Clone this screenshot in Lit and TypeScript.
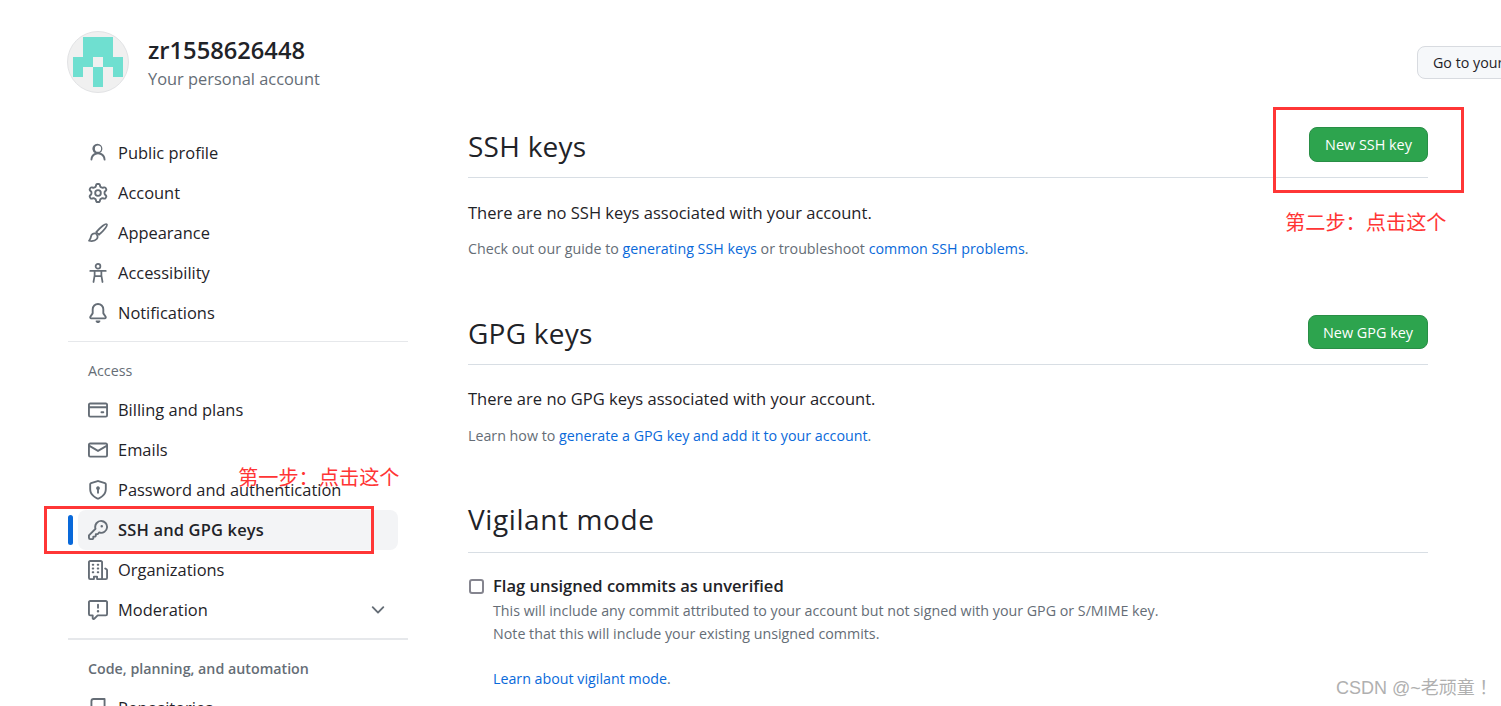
import { LitElement, html, css, svg } from "lit";
import { customElement } from "lit/decorators.js";

const f = (d: string) => svg`<path class="f" fill-rule="evenodd" d=${d}/>`;

const icons: Record<string, unknown> = {
  person: f("M10.561 8.073a6.005 6.005 0 0 1 3.432 5.142.75.75 0 1 1-1.498.07 4.5 4.5 0 0 0-8.99 0 .75.75 0 0 1-1.498-.07 6.004 6.004 0 0 1 3.431-5.142 3.999 3.999 0 1 1 4.123 0ZM10.5 4.5a2.5 2.5 0 1 0-5 0 2.5 2.5 0 0 0 5 0Z"),
  gear: f("M8 0a8.2 8.2 0 0 1 .701.031C9.444.095 9.99.645 10.16 1.29l.288 1.107c.018.066.079.158.212.224.231.114.454.243.668.386.123.082.233.09.299.071l1.103-.303c.644-.176 1.392.021 1.82.63.27.385.506.792.704 1.218.315.675.111 1.422-.364 1.891l-.814.806c-.049.048-.098.147-.088.294.016.257.016.515 0 .772-.01.147.038.246.088.294l.814.806c.475.469.679 1.216.364 1.891a7.977 7.977 0 0 1-.704 1.217c-.428.61-1.176.807-1.82.63l-1.102-.302c-.067-.019-.177-.011-.3.071a5.909 5.909 0 0 1-.668.386c-.133.066-.194.158-.211.224l-.29 1.106c-.168.646-.715 1.196-1.458 1.26a8.006 8.006 0 0 1-1.402 0c-.743-.064-1.289-.614-1.458-1.26l-.289-1.106c-.018-.066-.079-.158-.212-.224a5.738 5.738 0 0 1-.668-.386c-.123-.082-.233-.09-.299-.071l-1.103.303c-.644.176-1.392-.021-1.82-.63a8.12 8.12 0 0 1-.704-1.218c-.315-.675-.111-1.422.363-1.891l.815-.806c.05-.048.098-.147.088-.294a6.214 6.214 0 0 1 0-.772c.01-.147-.038-.246-.088-.294l-.815-.806C.635 6.045.431 5.298.746 4.623a7.92 7.92 0 0 1 .704-1.217c.428-.61 1.176-.807 1.82-.63l1.102.302c.067.019.177.011.3-.071.214-.143.437-.272.668-.386.133-.066.194-.158.211-.224l.29-1.106C6.009.645 6.556.095 7.299.03 7.53.01 7.764 0 8 0Zm-.571 1.525c-.036.003-.108.036-.137.146l-.289 1.105c-.147.561-.549.967-.998 1.189-.173.086-.34.183-.5.29-.417.278-.97.423-1.529.27l-1.103-.303c-.109-.03-.175.016-.195.045-.22.312-.412.644-.573.99-.014.031-.021.11.059.19l.815.806c.411.406.562.957.53 1.456a4.709 4.709 0 0 0 0 .582c.032.499-.119 1.05-.53 1.456l-.815.806c-.081.08-.073.159-.059.19.162.346.353.677.573.989.02.03.085.076.195.046l1.102-.303c.56-.153 1.113-.008 1.53.27.161.107.328.204.501.29.447.222.85.629.997 1.189l.289 1.105c.029.109.101.143.137.146a6.6 6.6 0 0 0 1.142 0c.036-.003.108-.036.137-.146l.289-1.105c.147-.561.549-.967.998-1.189.173-.086.34-.183.5-.29.417-.278.97-.423 1.529-.27l1.103.303c.109.029.175-.016.195-.045.22-.313.411-.644.573-.99.014-.031.021-.11-.059-.19l-.815-.806c-.411-.406-.562-.957-.53-1.456a4.709 4.709 0 0 0 0-.582c-.032-.499.119-1.05.53-1.456l.815-.806c.081-.08.073-.159.059-.19a6.464 6.464 0 0 0-.573-.989c-.02-.03-.085-.076-.195-.046l-1.102.303c-.56.153-1.113.008-1.53-.27a4.44 4.44 0 0 0-.501-.29c-.447-.222-.85-.629-.997-1.189l-.289-1.105c-.029-.11-.101-.143-.137-.146a6.6 6.6 0 0 0-1.142 0ZM11 8a3 3 0 1 1-6 0 3 3 0 0 1 6 0ZM9.5 8a1.5 1.5 0 1 0-3.001.001A1.5 1.5 0 0 0 9.5 8Z"),
  brush: svg`<path d="M15 1c-.9-.9-4.7 1.9-8.4 6.3l2.1 2.1C13.1 5.7 15.9 1.9 15 1Z"/><path d="M6.3 8.4c-2.2-.5-3.6.7-3.9 2.4-.2 1.3-.7 2.5-1.6 3.4 2.4.5 4.9.1 6.2-1.4 1-1.2.7-3-.7-4.4Z"/>`,
  access: svg`<circle cx="8" cy="2.6" r="1.9"/><path d="M1.8 6.3h12.4M5.3 6.3v3.6l-.9 5.3M10.7 6.3v3.6l.9 5.3M5.3 10.4h5.4"/>`,
  bell: f("M8 16c.9 0 1.7-.6 1.9-1.5.1-.3-.1-.5-.4-.5h-3c-.3 0-.5.2-.4.5.2.9 1 1.5 1.9 1.5ZM3 5a5 5 0 0 1 10 0v2.947c0 .05.015.098.042.139l1.703 2.555A1.519 1.519 0 0 1 13.482 13H2.518a1.516 1.516 0 0 1-1.263-2.36l1.703-2.554A.255.255 0 0 0 3 7.947Zm5-3.5A3.5 3.5 0 0 0 4.5 5v2.947c0 .346-.102.683-.294.97l-1.703 2.556a.017.017 0 0 0-.003.01l.001.006c0 .002.002.004.004.006l.006.004.007.001h10.964l.007-.001.006-.004.004-.006.001-.007a.017.017 0 0 0-.003-.01l-1.703-2.554a1.745 1.745 0 0 1-.294-.97V5A3.5 3.5 0 0 0 8 1.5Z"),
  card: f("M10.75 9a.75.75 0 0 0 0 1.5h1.5a.75.75 0 0 0 0-1.5h-1.5ZM0 3.75C0 2.784.784 2 1.75 2h12.5c.966 0 1.75.784 1.75 1.75v8.5A1.75 1.75 0 0 1 14.25 14H1.75A1.75 1.75 0 0 1 0 12.25ZM14.5 6.5h-13v5.75c0 .138.112.25.25.25h12.5a.25.25 0 0 0 .25-.25Zm0-2.75a.25.25 0 0 0-.25-.25H1.75a.25.25 0 0 0-.25.25V5h13Z"),
  mail: f("M1.75 2h12.5c.966 0 1.75.784 1.75 1.75v8.5A1.75 1.75 0 0 1 14.25 14H1.75A1.75 1.75 0 0 1 0 12.25v-8.5C0 2.784.784 2 1.75 2ZM1.5 12.251c0 .138.112.25.25.25h12.5a.25.25 0 0 0 .25-.25V5.809L8.38 9.397a.75.75 0 0 1-.76 0L1.5 5.809v6.442Zm13-8.181v-.32a.25.25 0 0 0-.25-.25H1.75a.25.25 0 0 0-.25.25v.32L8 7.88Z"),
  shield: f("m8.533.133 5.25 1.68A1.75 1.75 0 0 1 15 3.48V7c0 1.566-.32 3.182-1.303 4.682-.983 1.498-2.585 2.813-5.032 3.855a1.697 1.697 0 0 1-1.33 0c-2.447-1.042-4.049-2.357-5.032-3.855C1.32 10.182 1 8.566 1 7V3.48a1.75 1.75 0 0 1 1.217-1.667l5.25-1.68a1.748 1.748 0 0 1 1.066 0Zm-.61 1.429.001.001-5.25 1.68a.251.251 0 0 0-.174.237V7c0 1.36.275 2.666 1.057 3.859.784 1.194 2.121 2.342 4.366 3.298a.196.196 0 0 0 .154 0c2.245-.957 3.582-2.103 4.366-3.297C13.225 9.666 13.5 8.358 13.5 7V3.48a.25.25 0 0 0-.174-.238l-5.25-1.68a.25.25 0 0 0-.153 0ZM9.5 6.5c0 .536-.286 1.032-.75 1.3v2.45a.75.75 0 0 1-1.5 0V7.8A1.5 1.5 0 1 1 9.5 6.5Z"),
  key: f("M10.5 0a5.499 5.499 0 1 1-1.288 10.848l-.932.932a.75.75 0 0 1-.53.22H7v.75a.75.75 0 0 1-.22.53l-.5.5a.75.75 0 0 1-.53.22H5v.75a.75.75 0 0 1-.22.53l-.5.5a.75.75 0 0 1-.53.22h-2A1.75 1.75 0 0 1 0 14.25v-2c0-.199.079-.389.22-.53l4.932-4.932A5.5 5.5 0 0 1 10.5 0Zm-4 5.5c-.001.431.069.86.205 1.269a.75.75 0 0 1-.181.768L1.5 12.56v1.69c0 .138.112.25.25.25h1.69l.06-.06v-1.19a.75.75 0 0 1 .75-.75h1.19l.06-.06v-1.19a.75.75 0 0 1 .75-.75h1.19l1.023-1.025a.75.75 0 0 1 .768-.18A4 4 0 1 0 6.5 5.5ZM11 6a1 1 0 1 1 0-2 1 1 0 0 1 0 2Z"),
  org: f("M1.75 16A1.75 1.75 0 0 1 0 14.25V1.75C0 .784.784 0 1.75 0h8.5C11.216 0 12 .784 12 1.75v12.5c0 .085-.006.168-.018.25h2.268a.25.25 0 0 0 .25-.25V8.285a.25.25 0 0 0-.111-.208l-1.055-.703a.749.749 0 1 1 .832-1.248l1.055.703c.487.325.779.871.779 1.456v5.965A1.75 1.75 0 0 1 14.25 16h-3.5a.766.766 0 0 1-.197-.026c-.099.017-.2.026-.303.026h-3a.75.75 0 0 1-.75-.75V14h-1v1.25a.75.75 0 0 1-.75.75Zm-.25-1.75c0 .138.112.25.25.25H4v-1.25a.75.75 0 0 1 .75-.75h2.5a.75.75 0 0 1 .75.75v1.25h2.25a.25.25 0 0 0 .25-.25V1.75a.25.25 0 0 0-.25-.25h-8.5a.25.25 0 0 0-.25.25ZM3.75 6h.5a.75.75 0 0 1 0 1.5h-.5a.75.75 0 0 1 0-1.5ZM3 3.75A.75.75 0 0 1 3.75 3h.5a.75.75 0 0 1 0 1.5h-.5A.75.75 0 0 1 3 3.75Zm4 3A.75.75 0 0 1 7.75 6h.5a.75.75 0 0 1 0 1.5h-.5A.75.75 0 0 1 7 6.75ZM7.75 3h.5a.75.75 0 0 1 0 1.5h-.5a.75.75 0 0 1 0-1.5ZM3 9.75A.75.75 0 0 1 3.75 9h.5a.75.75 0 0 1 0 1.5h-.5A.75.75 0 0 1 3 9.75ZM7.75 9h.5a.75.75 0 0 1 0 1.5h-.5a.75.75 0 0 1 0-1.5Z"),
  report: f("M0 1.75C0 .784.784 0 1.75 0h12.5C15.216 0 16 .784 16 1.75v9.5A1.75 1.75 0 0 1 14.25 13H8.06l-2.573 2.573A1.458 1.458 0 0 1 3 14.543V13H1.75A1.75 1.75 0 0 1 0 11.25Zm1.75-.25a.25.25 0 0 0-.25.25v9.5c0 .138.112.25.25.25h2a.75.75 0 0 1 .75.75v2.19l2.72-2.72a.749.749 0 0 1 .53-.22h6.5a.25.25 0 0 0 .25-.25v-9.5a.25.25 0 0 0-.25-.25Zm7 2.25v2.5a.75.75 0 0 1-1.5 0v-2.5a.75.75 0 0 1 1.5 0ZM9 9a1 1 0 1 1-2 0 1 1 0 0 1 2 0Z"),
  repo: f("M2 2.5A2.5 2.5 0 0 1 4.5 0h8.75a.75.75 0 0 1 .75.75v12.5a.75.75 0 0 1-.75.75h-2.5a.75.75 0 0 1 0-1.5h1.75v-2h-8a1 1 0 0 0-.714 1.7.75.75 0 1 1-1.072 1.05A2.495 2.495 0 0 1 2 11.5Zm10.5-1h-8a1 1 0 0 0-1 1v6.708A2.486 2.486 0 0 1 4.5 9h8ZM5 12.25a.25.25 0 0 1 .25-.25h3.5a.25.25 0 0 1 .25.25v3.25a.25.25 0 0 1-.4.2l-1.45-1.087a.249.249 0 0 0-.3 0L5.4 15.7a.25.25 0 0 1-.4-.2Z"),
};

const icon = (n: string) => html`<svg class="icon" viewBox="0 0 16 16">${icons[n]}</svg>`;

const personal = [["person", "Public profile"], ["gear", "Account"], ["brush", "Appearance"], ["access", "Accessibility"], ["bell", "Notifications"]];
const access = [["card", "Billing and plans"], ["mail", "Emails"], ["shield", "Password and authentication"], ["key", "SSH and GPG keys"], ["org", "Organizations"], ["report", "Moderation"]];
const cells = [".###.", ".###.", "##.##", "#.#.#", "..#.."];

@customElement("app-root")
export class AppRoot extends LitElement {
  static styles = css`
    :host { display: block; width: 1501px; height: 706px; overflow: hidden; position: relative; background: #fff;
      font-family: "Open Sans", "Noto Sans CJK SC", sans-serif; color: #1f2328; font-size: 16.55px; }
    * { box-sizing: border-box; }
    a { color: #0969da; text-decoration: none; }
    .page { padding: 31px 0 0 67px; }
    .header { display: flex; align-items: center; gap: 19px; height: 62px; }
    .avatar { width: 62px; height: 62px; border-radius: 50%; background: #f0f0f0; border: 1px solid #e2e3e5; flex: none; display: block; }
    .who { display: flex; flex-direction: column; padding-top: 2px; }
    .name { font-size: 23.7px; font-weight: 600; line-height: 34px; margin-top: -2px; }
    .sub { font-size: 16.4px; color: #656d76; line-height: 24px; margin-top: 0; }
    .go { margin-left: auto; margin-right: -116px; flex: none; height: 33px; width: 200px; padding-left: 15px; display: flex; align-items: center;
      border: 1px solid #d8dbe0; border-radius: 8px; background: #f6f8fa; font-size: 14.25px; white-space: nowrap; }
    .body { display: flex; gap: 60px; margin-top: 34px; margin-left: 1px; }
    .side { width: 340px; flex: none; padding-top: 6px; }
    .item { display: flex; align-items: center; gap: 10px; height: 40px; margin: 0 10px; padding: 0 10px; border-radius: 8px; position: relative; font-size: 16.45px; }
    .item span { padding-bottom: 2px; }
    .item.active { background: #f3f4f6; font-weight: 600; letter-spacing: .18px; }
    .item.active::before { content: ""; position: absolute; left: -10px; top: 5px; width: 5px; height: 30px; border-radius: 4px; background: #0969da; }
    .icon { width: 20px; height: 20px; flex: none; fill: none; stroke: #656d76; stroke-width: 1.4; stroke-linecap: round; stroke-linejoin: round; }
    .icon .f { fill: #656d76; stroke: none; }
    .chev { margin-left: auto; margin-right: 0; }
    hr { border: 0; height: 1px; background: #e6e8eb; margin: 8px 0 0; }
    hr.thick { height: 2px; }
    .label { font-size: 14.25px; color: #656d76; font-weight: 400; line-height: 22px; padding: 18px 20px 8px; }
    .label.b { font-weight: 600; padding: 18px 20px 8px; }
    .main { width: 960px; flex: none; }
    .sec { display: flex; justify-content: space-between; align-items: flex-start; height: 51px; border-bottom: 1px solid #d8dee4; }
    .sec.g { height: 50px; margin-top: 54px; }
    .sec.v { margin-top: 53px; height: 52px; }
    h2 { margin: -1px 0 0; font-size: 28px; font-weight: 400; line-height: 40px; letter-spacing: .25px; }
    .g h2 { margin-top: -2px; }
    .v h2 { margin-top: -2px; letter-spacing: .6px; }
    .btn { display: flex; align-items: center; justify-content: center; width: 119px; height: 35px; border-radius: 8px; background: #2da44e; color: #fff;
      border: 1px solid #298e46; font-size: 14.4px; }
    .g .btn { width: 120px; height: 34px; }
    .p1 { margin: 23px 0 0; line-height: 24px; }
    .p2 { margin: 12px 0 0; line-height: 24px; font-size: 14.25px; color: #656d76; }
    .g + .p1 { margin-top: 22px; }
    .g + .p1 + .p2 { margin-top: 13px; }
    .check { display: flex; gap: 9px; margin-top: 21px; }
    .box { width: 15px; height: 15px; border: 2px solid #85858f; border-radius: 3px; margin: 5px 0 0 1px; flex: none; }
    .ct { flex: 1; }
    .ct b { font-weight: 600; display: block; line-height: 24px; }
    .note { font-size: 14.25px; line-height: 22.6px; color: #656d76; margin-top: 2px; }
    .note.l { margin-top: 23px; }
    .red { position: absolute; border: 3px solid #ff3636; pointer-events: none; }
    .r1 { left: 1273px; top: 107px; width: 191px; height: 86px; }
    .r2 { left: 44px; top: 506px; width: 330px; height: 48px; }
    .ann { position: absolute; color: #ff3535; font-family: "Noto Sans CJK SC", sans-serif; font-size: 20.2px; line-height: 24px; white-space: nowrap; }
    .a1 { left: 238px; top: 465px; }
    .a2 { left: 1285px; top: 210px; }
    .mark { position: absolute; left: 1336px; top: 676px; font-family: "Liberation Sans", "Noto Sans CJK TC", sans-serif; font-size: 18px; line-height: 24px; color: #b0b0b0; white-space: nowrap; }
  `;

  private row(r: string[]) {
    return html`<div class="item ${r[0] === "key" ? "active" : ""}">${icon(r[0])}<span>${r[1]}</span>
      ${r[0] === "report" ? html`<svg class="icon chev" viewBox="0 0 16 16"><path class="f" d="M12.78 5.22a.749.749 0 0 1 0 1.06l-4.25 4.25a.749.749 0 0 1-1.06 0L3.22 6.28a.749.749 0 1 1 1.06-1.06L8 8.939l3.72-3.719a.749.749 0 0 1 1.06 0Z"/></svg>` : ""}</div>`;
  }

  render() {
    return html`
      <div class="page">
        <div class="header">
          <svg class="avatar" viewBox="-5 -5 60 60">
            ${cells.map((line, y) => [...line].map((c, x) => c === "#" ? svg`<rect x=${x * 10} y=${y * 10} width="10" height="10" fill="#6fdfd0" shape-rendering="crispEdges"/>` : ""))}
          </svg>
          <div class="who"><div class="name">zr1558626448</div><div class="sub">Your personal account</div></div>
          <div class="go">Go to your personal profile</div>
        </div>
        <div class="body">
          <nav class="side">
            ${personal.map((r) => this.row(r))}
            <hr />
            <div class="label">Access</div>
            ${access.map((r) => this.row(r))}
            <hr class="thick" />
            <div class="label b">Code, planning, and automation</div>
            ${this.row(["repo", "Repositories"])}
          </nav>
          <main class="main">
            <div class="sec"><h2>SSH keys</h2><div class="btn">New SSH key</div></div>
            <p class="p1">There are no SSH keys associated with your account.</p>
            <p class="p2">Check out our guide to <a>generating SSH keys</a> or troubleshoot <a>common SSH problems</a>.</p>
            <div class="sec g"><h2>GPG keys</h2><div class="btn">New GPG key</div></div>
            <p class="p1">There are no GPG keys associated with your account.</p>
            <p class="p2">Learn how to <a>generate a GPG key and add it to your account</a>.</p>
            <div class="sec v"><h2>Vigilant mode</h2></div>
            <div class="check">
              <div class="box"></div>
              <div class="ct">
                <b>Flag unsigned commits as unverified</b>
                <div class="note">This will include any commit attributed to your account but not signed with your GPG or S/MIME key.<br />Note that this will include your existing unsigned commits.</div>
                <div class="note l"><a>Learn about vigilant mode</a>.</div>
              </div>
            </div>
          </main>
        </div>
      </div>
      <div class="red r1"></div>
      <div class="red r2"></div>
      <div class="ann a1">第一步：点击这个</div>
      <div class="ann a2">第二步：点击这个</div>
      <div class="mark">CSDN @~老顽童！</div>
    `;
  }
}
